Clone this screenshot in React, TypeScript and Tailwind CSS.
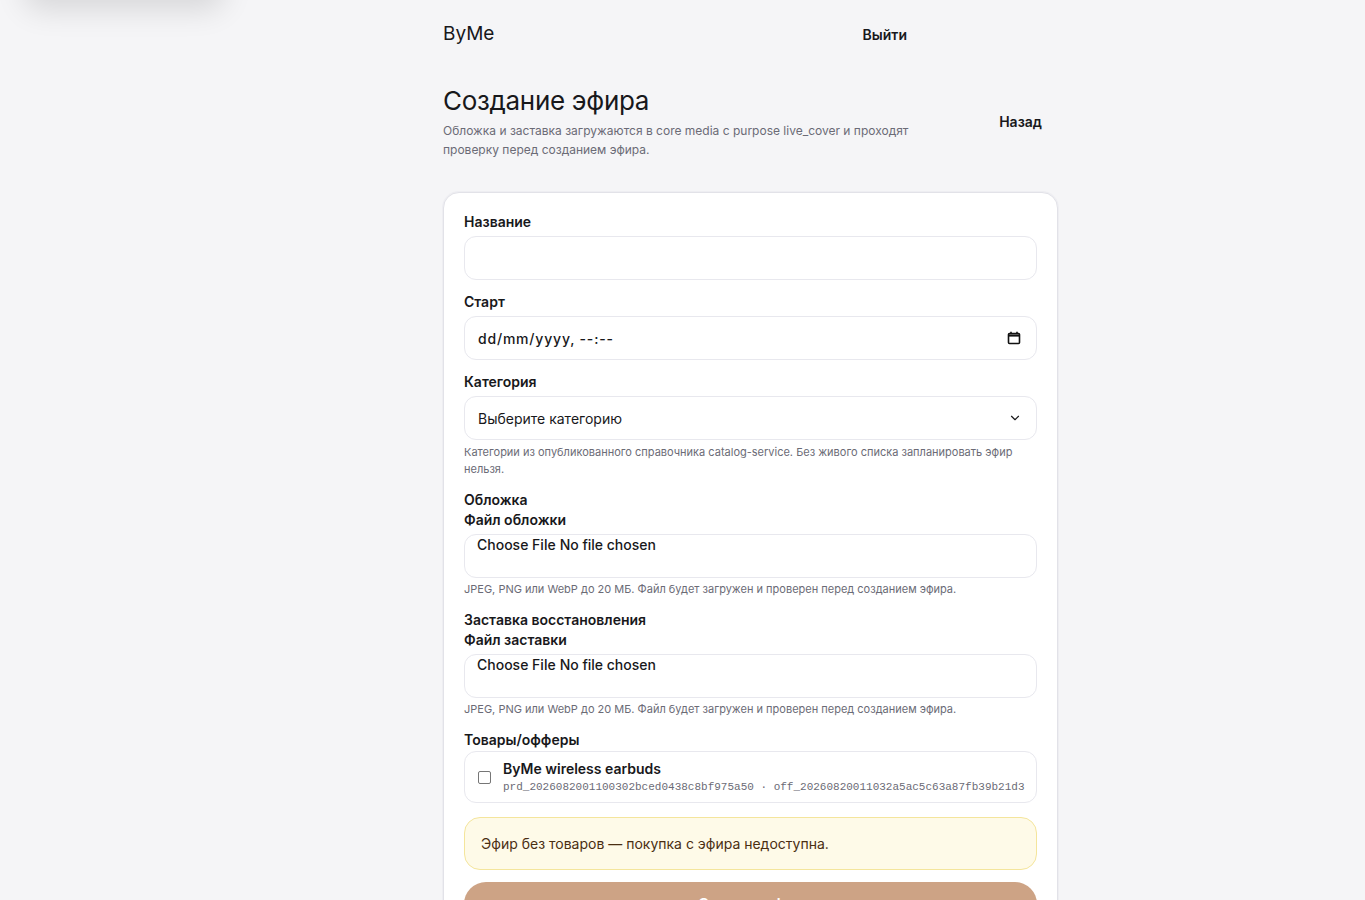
import { ChevronDown } from 'lucide-react';

const font = { fontFamily: 'Inter, "Noto Sans", sans-serif' };

const Label = ({ children }: { children: React.ReactNode }) => (
  <div className="text-[14px] leading-5 font-semibold text-[#18181b]">{children}</div>
);

const Hint = ({ children }: { children: React.ReactNode }) => (
  <p className="mt-1 text-[11px] leading-[17px] text-[#6b6b76]">{children}</p>
);

const FileField = ({ group, label }: { group: string; label: string }) => (
  <div>
    <Label>{group}</Label>
    <Label>{label}</Label>
    <div className="mt-[4px] h-[44px] rounded-xl border border-[#e8e8ee] bg-white px-3">
      <input
        type="file"
        accept="image/jpeg,image/png,image/webp"
        className="block h-5 w-full text-[14px] leading-5 font-medium text-[#18181b] file:mr-1 file:font-medium"
      />
    </div>
    <p className="mt-[3px] text-[11px] leading-[17px] text-[#6b6b76]">
      JPEG, PNG или WebP до 20 МБ. Файл будет загружен и проверен перед созданием эфира.
    </p>
  </div>
);

export default function App() {
  return (
    <div className="relative min-h-screen overflow-hidden bg-[#f5f5f7]" style={font}>
      {/* toast sliding out at the top left */}
      <div className="absolute -top-16 left-6 h-16 w-[200px] rounded-2xl bg-white shadow-[0_10px_30px_rgba(0,0,0,0.12)]" />

      <div className="pl-[136px]">
        <div className="mx-auto w-[615px] pb-10">
          <header className="flex w-[480px] items-center justify-between pt-[21px]">
            <span className="text-[19px] leading-[26px] text-[#18181b]">ByMe</span>
            <button className="px-4 text-[14px] font-semibold text-[#18181b]">Выйти</button>
          </header>

          <div className="mt-[38px] flex items-start justify-between">
            <div className="w-[480px]">
              <h1 className="text-[26px] leading-8 font-normal tracking-[-0.3px] text-[#18181b]">Создание эфира</h1>
              <p className="mt-[4px] text-[12px] leading-[19px] text-[#6b6b76]">
                Обложка и заставка загружаются в core media с purpose live_cover и проходят проверку перед созданием эфира.
              </p>
            </div>
            <button className="mt-[26px] px-4 text-[14px] font-semibold text-[#18181b]">Назад</button>
          </div>

          <form className="mt-[33px] flex flex-col gap-3 rounded-2xl border border-[#e2e2e8] bg-white px-5 pt-[19px] pb-6 shadow-[0_0_0_1px_#eeeef2]">
            <div>
              <Label>Название</Label>
              <input
                type="text"
                className="mt-[4px] h-11 w-full rounded-xl border border-[#e8e8ee] bg-white px-3 text-[14px] outline-none"
              />
            </div>

            <div>
              <Label>Старт</Label>
              <div className="mt-[4px] flex h-11 items-center justify-between rounded-xl border border-[#e8e8ee] bg-white pr-[15px] pl-[13px]">
                <span className="text-[14px] font-medium tracking-[0.8px] text-[#18181b]">dd/mm/yyyy, --:--</span>
                <svg width="14" height="14" viewBox="0 0 14 14" fill="none" stroke="#111" strokeWidth="1.6">
                  <rect x="1.5" y="2.5" width="11" height="10" rx="1" />
                  <path d="M1.5 4.5h11" strokeWidth="2.2" />
                  <path d="M4 0.8v2.2M10 0.8v2.2" />
                </svg>
              </div>
            </div>

            <div>
              <Label>Категория</Label>
              <div className="mt-[4px] flex h-11 items-center justify-between rounded-xl border border-[#e8e8ee] bg-white pr-[14px] pl-[13px]">
                <span className="text-[14px] text-[#18181b]">Выберите категорию</span>
                <ChevronDown size={14} strokeWidth={2} className="text-[#18181b]" />
              </div>
              <Hint>
                Категории из опубликованного справочника catalog-service. Без живого списка запланировать эфир нельзя.
              </Hint>
            </div>

            <FileField group="Обложка" label="Файл обложки" />
            <FileField group="Заставка восстановления" label="Файл заставки" />

            <div>
              <Label>Товары/офферы</Label>
              <label className="mt-[1px] flex h-[52px] items-center gap-3 rounded-xl border border-[#e8e8ee] bg-white px-[13px]">
                <input type="checkbox" className="h-[13px] w-[13px] shrink-0 appearance-none rounded-[2px] border border-[#767676] bg-white" />
                <div className="min-w-0">
                  <div className="text-[14px] leading-5 font-semibold text-[#18181b]">ByMe wireless earbuds</div>
                  <div className="text-[11px] leading-4 whitespace-nowrap text-[#6b6b76]" style={{ fontFamily: '"Liberation Mono", monospace' }}>
                    prd_2026082001100302bced0438c8bf975a50 · off_20260820011032a5ac5c63a87fb39b21d3
                  </div>
                </div>
              </label>
            </div>

            <div className="mt-[2px] flex h-[53px] items-center rounded-2xl border border-[#f4e59c] bg-[#fefae8] px-4 text-[14px] text-[#4a2e12]">
              Эфир без товаров — покупка с эфира недоступна.
            </div>

            <button type="button" className="h-11 rounded-[22px] bg-[#cda385] text-[15px] font-semibold text-white">
              Создать эфир
            </button>
          </form>
        </div>
      </div>
    </div>
  );
}
